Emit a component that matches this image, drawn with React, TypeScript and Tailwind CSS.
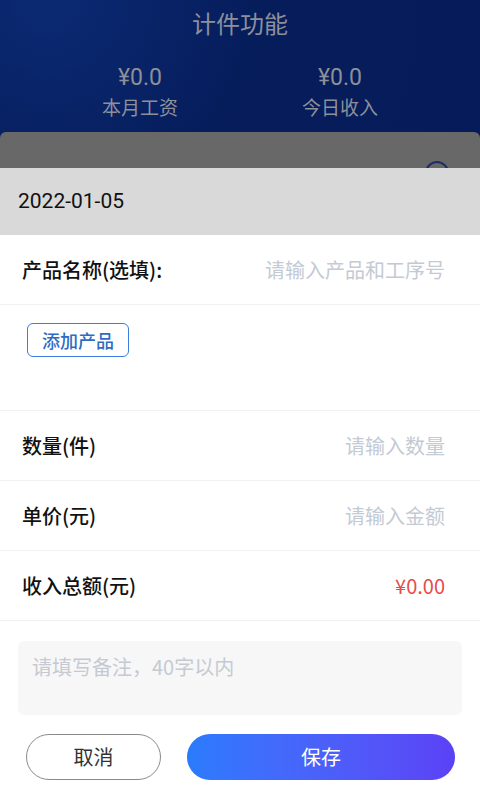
import React from 'react';

const font = { fontFamily: '"Noto Sans CJK SC", "Noto Sans", sans-serif' };
const latin = { fontFamily: 'Roboto, "Noto Sans CJK SC", sans-serif' };

function Row({ label, value, valueClass }: { label: string; value: string; valueClass: string }) {
  return (
    <div className="flex h-[70px] items-center justify-between border-b border-[#f0f1f4] pl-[22px] pr-[35px]">
      <span className="text-[20px] font-medium text-[#111]">{label}</span>
      <span className={`text-[20px] ${valueClass}`}>{value}</span>
    </div>
  );
}

export default function App() {
  return (
    <div className="relative h-[800px] w-[480px] overflow-hidden bg-white" style={font}>
      {/* dimmed page header */}
      <div className="h-[140px] bg-[radial-gradient(circle_at_10%_0%,#0b2a73_0%,#061d5c_45%,#061c5a_100%)] text-[#8c909a]">
        <div className="pt-[6px] text-center text-[24px] leading-[34px]">计件功能</div>
        <div className="mt-[23px] grid grid-cols-2 pl-[40px] pr-[40px]">
          <div className="flex flex-col items-center">
            <span className="text-[23px] leading-[30px]" style={latin}>¥0.0</span>
            <span className="mt-[1px] text-[19px] leading-[26px]">本月工资</span>
          </div>
          <div className="flex flex-col items-center">
            <span className="text-[23px] leading-[30px]" style={latin}>¥0.0</span>
            <span className="mt-[1px] text-[19px] leading-[26px]">今日收入</span>
          </div>
        </div>
      </div>

      {/* dimmed card behind sheet */}
      <div className="absolute left-0 right-0 top-[132px] h-[40px] rounded-t-[6px] bg-[#686868]">
        <div className="absolute right-[31px] top-[29px] h-[24px] w-[24px] rounded-full border-2 border-[#1d2e63]" />
      </div>

      {/* bottom sheet */}
      <div className="absolute left-0 right-0 top-[168px] bottom-0 bg-white">
        <div className="flex h-[67px] items-center bg-[#d9d9d9] pl-[18px]">
          <span className="text-[21px] text-[#111]" style={latin}>2022-01-05</span>
        </div>

        <div className="flex h-[70px] items-center justify-between border-b border-[#f0f1f4] pl-[22px] pr-[35px]">
          <span className="text-[20px] font-medium text-[#111]">产品名称(选填):</span>
          <span className="text-[20px] text-[#c4cad3]">请输入产品和工序号</span>
        </div>

        <div className="h-[106px] border-b border-[#f0f1f4] pl-[27px] pt-[18px]">
          <button className="flex h-[34px] w-[102px] items-center justify-center rounded-[6px] border-[1.5px] border-[#3b7de0] text-[18px] font-medium text-[#2d6cc4]">
            添加产品
          </button>
        </div>

        <Row label="数量(件)" value="请输入数量" valueClass="text-[#c4cad3]" />
        <Row label="单价(元)" value="请输入金额" valueClass="text-[#c4cad3]" />
        <Row label="收入总额(元)" value="¥0.00" valueClass="text-[#e84a4a]" />

        <div className="px-[18px] pt-[20px]">
          <div className="h-[74px] rounded-[6px] bg-[#f7f7f7] pl-[14px] pt-[11px] text-[20px] text-[#c5cad2]">
            请填写备注，40字以内
          </div>
        </div>

        <div className="mt-[19px] flex items-center pl-[26px] pr-[25px]">
          <button className="flex h-[46px] w-[135px] items-center justify-center rounded-full border-[1.5px] border-[#8a8a8a] text-[20px] text-[#333]">
            取消
          </button>
          <button className="ml-[26px] flex h-[46px] flex-1 items-center justify-center rounded-full bg-gradient-to-r from-[#2a7bfd] to-[#5b41f6] text-[20px] text-white">
            保存
          </button>
        </div>
      </div>
    </div>
  );
}
